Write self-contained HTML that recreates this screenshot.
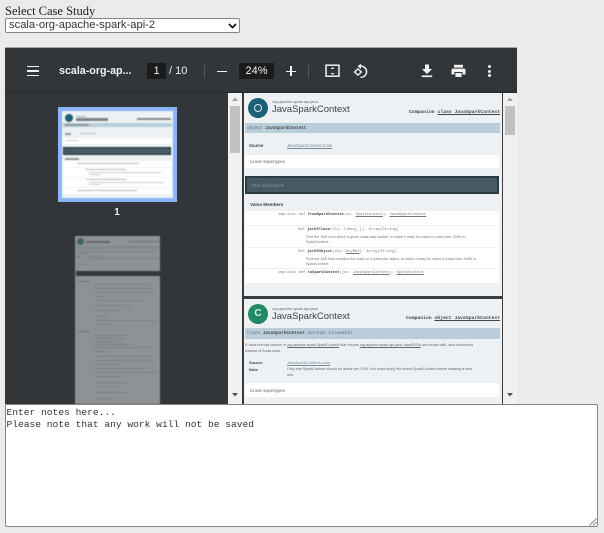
<!DOCTYPE html>
<html>
<head>
<meta charset="utf-8">
<style>
html,body{margin:0;padding:0;width:604px;height:533px;overflow:hidden;background:#ebebeb}
div,span{position:absolute;display:block;box-sizing:border-box;white-space:nowrap}
svg{position:absolute;overflow:visible}
#p{left:0;top:0;width:604px;height:533px;filter:blur(.35px)}
.s{font-family:"Liberation Sans",sans-serif;color:#777;font-size:4px;line-height:5px}
.m{font-family:"Liberation Mono",monospace;color:#777;font-size:3.8px;line-height:5px}
.b{font-weight:bold;color:#444}
.u{text-decoration:underline}
.w{background:#fff}
.tb{font-family:"Liberation Sans",sans-serif;color:#f1f1f1;font-size:12px;line-height:16px}
</style>
</head>
<body>
<div id="p">
<div style="left:5px;top:3px;font:12.5px/16px 'Liberation Serif',serif;color:#222">Select Case Study</div>
<div style="left:5px;top:18px;width:235px;height:15px;background:#fff;border:1px solid #858585;border-radius:2px;font:11.2px/13px 'Liberation Sans',sans-serif;color:#333;padding-left:3px">scala-org-apache-spark-api-2</div>
<svg style="left:228px;top:23px" width="10" height="6"><path d="M1 1L4.5 4.5L8 1" fill="none" stroke="#111" stroke-width="1.7"/></svg>

<!-- viewer -->
<div style="left:5px;top:47px;width:512px;height:357px;background:#323639;border-top:1px solid #a5a5a5;overflow:hidden"></div>

<!-- toolbar -->
<div style="left:5px;top:92px;width:512px;height:1px;background:#26292b"></div>
<div style="left:27px;top:65.500px;width:12px;height:1.500px;background:#f1f1f1"></div>
<div style="left:27px;top:70px;width:12px;height:1.500px;background:#f1f1f1"></div>
<div style="left:27px;top:74.500px;width:12px;height:1.500px;background:#f1f1f1"></div>
<div class="tb" style="left:59px;top:63px;font-weight:bold;font-size:10.700px">scala-org-ap...</div>
<div style="left:147px;top:63px;width:19px;height:16px;background:#191b1c"></div>
<div class="tb" style="left:147px;top:63px;width:19px;text-align:center;font-size:11px">1</div>
<div class="tb" style="left:169px;top:63px;font-size:11px">/ 10</div>
<div style="left:204px;top:65px;width:1px;height:13px;background:#55595c"></div>
<div style="left:217px;top:70.500px;width:10px;height:1.500px;background:#f1f1f1"></div>
<div style="left:239px;top:63px;width:35px;height:16px;background:#191b1c"></div>
<div class="tb" style="left:239px;top:63px;width:35px;text-align:center;font-size:11px">24%</div>
<div style="left:286px;top:70.500px;width:10px;height:1.500px;background:#f1f1f1"></div>
<div style="left:290.250px;top:66px;width:1.500px;height:10px;background:#f1f1f1"></div>
<div style="left:308px;top:65px;width:1px;height:13px;background:#55595c"></div>
<svg style="left:325px;top:64px" width="16" height="14" viewBox="0 0 16 14"><rect x="1" y="1.200" width="13" height="11" fill="none" stroke="#f1f1f1" stroke-width="1.500"/><path d="M7.500 3L5.600 5H9.400ZM7.500 11L5.600 9H9.400Z" fill="#f1f1f1"/></svg>
<svg style="left:353px;top:63px" width="16" height="17" viewBox="0 0 16 17"><path d="M7 3.200A5.600 5.600 0 1 1 7.500 14.300" fill="none" stroke="#f1f1f1" stroke-width="1.500"/><path d="M8 .6V6L4.600 3.300Z" fill="#f1f1f1"/><path d="M5 5.900L1.600 9L5 12.100L8.400 9Z" fill="none" stroke="#f1f1f1" stroke-width="1.400"/></svg>
<svg style="left:420.500px;top:64px" width="12" height="14" viewBox="0 0 12 14"><path d="M4 .5H8V5H11L6 10L1 5H4Z" fill="#f1f1f1"/><rect x=".8" y="11.400" width="10.400" height="1.700" fill="#f1f1f1"/></svg>
<svg style="left:451px;top:64px" width="15" height="14" viewBox="0 0 15 14"><path d="M3 .8H12V3.600H3Z" fill="#f1f1f1"/><path d="M2 4.600H13Q14.500 4.600 14.500 6.100V10.500H11.600V8H3.400V10.500H.5V6.100Q.5 4.600 2 4.600Z" fill="#f1f1f1"/><path d="M4.400 9H10.600V13H4.400Z" fill="#f1f1f1"/></svg>
<div style="left:488px;top:65px;width:3px;height:3px;border-radius:50%;background:#f1f1f1"></div>
<div style="left:488px;top:69.500px;width:3px;height:3px;border-radius:50%;background:#f1f1f1"></div>
<div style="left:488px;top:74px;width:3px;height:3px;border-radius:50%;background:#f1f1f1"></div>

<!-- left scrollbar -->
<div style="left:228px;top:93px;width:14px;height:311px;background:#f1f1f1"></div>
<div style="left:230px;top:106px;width:10px;height:47px;background:#c1c1c1"></div>
<svg style="left:232px;top:97px" width="7" height="4"><path d="M0 4L3 .5L6 4Z" fill="#a3a3a3"/></svg>
<svg style="left:232px;top:393px" width="7" height="4"><path d="M0 0L3 3.500L6 0Z" fill="#505050"/></svg>
<!-- right scrollbar -->
<div style="left:503px;top:93px;width:14px;height:311px;background:#f1f1f1"></div>
<div style="left:505px;top:106px;width:10px;height:29px;background:#c1c1c1"></div>
<svg style="left:507px;top:97px" width="7" height="4"><path d="M0 4L3 .5L6 4Z" fill="#a3a3a3"/></svg>
<svg style="left:507px;top:393px" width="7" height="4"><path d="M0 0L3 3.500L6 0Z" fill="#505050"/></svg>

<!-- main page area -->
<div style="left:242.500px;top:93px;width:260px;height:311px;background:#3a3e41"></div>

<!-- page 1 -->
<div style="left:244px;top:93px;width:257.500px;height:203px;background:#edf1f4"></div>
<div style="left:248px;top:98px;width:20px;height:20px;border-radius:50%;background:#1d5f77"></div>
<div style="left:254px;top:104px;width:8px;height:8px;border-radius:50%;border:1.300px solid #dfe9ee"></div>
<div class="s" style="left:272px;top:99px;font-size:4px;color:#666">org.apache.spark.api.java</div>
<div style="left:272px;top:103px;font:9.500px/14px 'Liberation Sans',sans-serif;color:#39444a">JavaSparkContext</div>
<div class="m b" style="left:409px;top:109.500px;font-size:4.750px;color:#444">Companion <span class="u" style="position:static;display:inline">class JavaSparkContext</span></div>
<div style="left:245px;top:123px;width:255px;height:10px;background:#b9cdda"></div>
<div class="m" style="left:247px;top:125.500px;font-size:4.300px;color:#5d6e78">object <span class="b" style="position:static;display:inline">JavaSparkContext</span></div>
<div class="s b" style="left:249px;top:142.500px;font-size:4.200px">Source</div>
<div class="s u" style="left:287px;top:142.500px;font-size:4.200px;color:#7a8a9c">JavaSparkContext.scala</div>
<div class="w" style="left:245px;top:155px;width:254px;height:13px"></div>
<div class="s" style="left:250px;top:159px;font-size:4.300px;color:#666">Linear Supertypes</div>
<div style="left:245px;top:176px;width:254px;height:18px;background:#465a64;border:2px solid #2c3a42"></div>
<div class="s" style="left:251px;top:182.500px;font-size:4.200px;color:#8b9aa3">Filter all members</div>
<div class="s b" style="left:250px;top:201.500px;font-size:4.600px">Value Members</div>
<div class="w" style="left:245px;top:211px;width:254px;height:14px"></div>
<div class="m" style="left:278px;top:212.500px"><span style="position:static;display:inline">implicit def </span><span class="b" style="position:static;display:inline">fromSparkContext</span>(sc: <span class="u" style="position:static;display:inline">SparkContext</span>): <span class="u" style="position:static;display:inline">JavaSparkContext</span></div>
<div class="w" style="left:245px;top:226px;width:254px;height:21px"></div>
<div class="m" style="left:298px;top:227.500px">def <span class="b" style="position:static;display:inline">jarOfClass</span>(cls: Class[_]): Array[String]</div>
<div class="s" style="left:306px;top:234.500px;font-size:3.700px">Find the JAR from which a given class was loaded, to make it easy for users to pass their JARs to</div>
<div class="s" style="left:306px;top:239.500px;font-size:3.700px">SparkContext.</div>
<div class="w" style="left:245px;top:248px;width:254px;height:20px"></div>
<div class="m" style="left:298px;top:249.500px">def <span class="b" style="position:static;display:inline">jarOfObject</span>(obj: <span class="u" style="position:static;display:inline">AnyRef</span>): Array[String]</div>
<div class="s" style="left:306px;top:256.500px;font-size:3.700px">Find the JAR that contains the class of a particular object, to make it easy for users to pass their JARs to</div>
<div class="s" style="left:306px;top:261.500px;font-size:3.700px">SparkContext.</div>
<div class="w" style="left:245px;top:269px;width:254px;height:14px"></div>
<div class="m" style="left:278px;top:271px">implicit def <span class="b" style="position:static;display:inline">toSparkContext</span>(jsc: <span class="u" style="position:static;display:inline">JavaSparkContext</span>): <span class="u" style="position:static;display:inline">SparkContext</span></div>

<!-- page 2 -->
<div style="left:244px;top:299px;width:257.500px;height:105px;background:#edf1f4"></div>
<div style="left:248px;top:304px;width:20px;height:20px;border-radius:50%;background:#1f8a63"></div>
<div style="left:248px;top:304px;width:20px;font:bold 10px/20px 'Liberation Sans',sans-serif;color:#dff0ea;text-align:center">C</div>
<div class="s" style="left:272px;top:306px;font-size:4px;color:#666">org.apache.spark.api.java</div>
<div style="left:272px;top:310px;font:9.500px/14px 'Liberation Sans',sans-serif;color:#39444a">JavaSparkContext</div>
<div class="m b" style="left:406px;top:315.500px;font-size:4.750px;color:#444">Companion <span class="u" style="position:static;display:inline">object JavaSparkContext</span></div>
<div style="left:245px;top:328px;width:255px;height:11px;background:#b9cdda"></div>
<div class="m" style="left:247px;top:331px;font-size:4.400px;color:#5d6e78">class <span class="b" style="position:static;display:inline">JavaSparkContext</span> extends Closeable</div>
<div class="s" style="left:245px;top:342.500px;font-size:3.700px;color:#666">A Java-friendly version of <span class="u" style="position:static;display:inline">org.apache.spark.SparkContext</span> that returns <span class="u" style="position:static;display:inline">org.apache.spark.api.java.JavaRDDs</span> and works with Java collections</div>
<div class="s" style="left:245px;top:348.500px;font-size:3.700px;color:#666">instead of Scala ones.</div>
<div class="s b" style="left:249px;top:359.500px;font-size:4px">Source</div>
<div class="s u" style="left:287px;top:359.500px;font-size:4px;color:#7a8a9c">JavaSparkContext.scala</div>
<div class="s b" style="left:249px;top:366.500px;font-size:4px">Note</div>
<div class="s" style="left:287px;top:366.500px;font-size:3.700px;color:#666">Only one SparkContext should be active per JVM. You must stop() the active SparkContext before creating a new</div>
<div class="s" style="left:287px;top:373px;font-size:3.700px;color:#666">one.</div>
<div class="w" style="left:245px;top:383px;width:254px;height:14px"></div>
<div class="s" style="left:250px;top:387.500px;font-size:4.300px;color:#666">Linear Supertypes</div>

<!-- thumb 1 -->
<div style="left:58px;top:107px;width:119px;height:95px;background:#8ab4f8"></div>
<div style="left:62px;top:111px;width:111px;height:87px;background:#edf1f4;filter:blur(.5px)">
  <div style="left:3px;top:3px;width:8px;height:8px;border-radius:50%;background:#1d5f77"></div>
  <div style="left:14px;top:5px;width:10px;height:1px;background:#aaa"></div>
  <div style="left:14px;top:7px;width:32px;height:2.500px;background:#7a8388"></div>
  <div style="left:75px;top:7px;width:34px;height:1.500px;background:#888"></div>
  <div style="left:1px;top:12px;width:109px;height:4px;background:#b9cdda"></div>
  <div style="left:3px;top:13px;width:24px;height:1.500px;background:#8d9aa3"></div>
  <div style="left:3px;top:22px;width:6px;height:1.500px;background:#999"></div>
  <div style="left:18px;top:22px;width:16px;height:1px;background:#bbc"></div>
  <div class="w" style="left:1px;top:27px;width:108px;height:6px"></div>
  <div style="left:3px;top:29px;width:14px;height:1px;background:#ccc"></div>
  <div style="left:1px;top:36px;width:108px;height:8px;background:#465a64;border:1px solid #2c3a42"></div>
  <div style="left:3px;top:47px;width:14px;height:1.500px;background:#999"></div>
  <div class="w" style="left:1px;top:50px;width:108px;height:6px"></div>
  <div style="left:15px;top:52px;width:62px;height:1.200px;background:#bbb"></div>
  <div class="w" style="left:1px;top:57px;width:108px;height:9px"></div>
  <div style="left:24px;top:58px;width:40px;height:1px;background:#bbb"></div>
  <div style="left:27px;top:61px;width:72px;height:1px;background:#ccc"></div>
  <div style="left:27px;top:63px;width:12px;height:1px;background:#ccc"></div>
  <div class="w" style="left:1px;top:67px;width:108px;height:9px"></div>
  <div style="left:24px;top:68px;width:40px;height:1px;background:#bbb"></div>
  <div style="left:27px;top:71px;width:75px;height:1px;background:#ccc"></div>
  <div style="left:27px;top:73px;width:12px;height:1px;background:#ccc"></div>
  <div class="w" style="left:1px;top:76.500px;width:108px;height:6px"></div>
  <div style="left:15px;top:78.500px;width:60px;height:1.200px;background:#bbb"></div>
</div>
<div style="left:107px;top:206px;width:20px;text-align:center;font:bold 10px/14px 'Liberation Sans',sans-serif;color:#eee">1</div>

<!-- thumb 2 -->
<div style="left:75px;top:236px;width:85px;height:168px;background:#8e9294;filter:blur(.6px);overflow:hidden">
  <div style="left:2px;top:2px;width:7px;height:7px;border-radius:50%;background:#43695d"></div>
  <div style="left:11px;top:5px;width:24px;height:2px;background:#62676a"></div>
  <div style="left:53px;top:5px;width:32px;height:1px;background:#727678"></div>
  <div style="left:1px;top:10px;width:84px;height:3px;background:#7f8a92"></div>
  <div style="left:2px;top:15px;width:78px;height:1px;background:#7c8083"></div>
  <div style="left:2px;top:17px;width:10px;height:1px;background:#7c8083"></div>
  <div style="left:2px;top:20px;width:4px;height:1px;background:#707376"></div>
  <div style="left:14px;top:20px;width:12px;height:1px;background:#7c8083"></div>
  <div style="left:14px;top:22px;width:70px;height:1px;background:#7c8083"></div>
  <div style="left:2px;top:28px;width:10px;height:1px;background:#7c8083"></div>
  <div style="left:1px;top:35px;width:84px;height:5px;background:#34393c"></div>
  <div style="left:3px;top:45px;width:12px;height:1px;background:#707376"></div>
  <div style="left:20px;top:48px;width:56px;height:1px;background:#7c8083"></div>
  <div style="left:20px;top:52px;width:56px;height:1px;background:#7c8083"></div>
  <div style="left:20px;top:56px;width:60px;height:1px;background:#7c8083"></div>
  <div style="left:20px;top:60px;width:8px;height:1px;background:#7c8083"></div>
  <div style="left:20px;top:64px;width:50px;height:1px;background:#7c8083"></div>
  <div style="left:20px;top:69px;width:36px;height:1px;background:#7c8083"></div>
  <div style="left:20px;top:74px;width:26px;height:1px;background:#7c8083"></div>
  <div style="left:20px;top:80px;width:12px;height:1px;background:#7c8083"></div>
  <div style="left:20px;top:84px;width:62px;height:1px;background:#7c8083"></div>
  <div style="left:20px;top:88px;width:18px;height:1px;background:#7c8083"></div>
  <div style="left:3px;top:95px;width:12px;height:1px;background:#707376"></div>
  <div style="left:20px;top:99px;width:34px;height:1px;background:#7c8083"></div>
  <div style="left:20px;top:102px;width:30px;height:1px;background:#7c8083"></div>
  <div style="left:20px;top:105px;width:24px;height:1px;background:#7c8083"></div>
  <div style="left:20px;top:108px;width:36px;height:1px;background:#7c8083"></div>
  <div style="left:20px;top:111px;width:58px;height:1px;background:#7c8083"></div>
  <div style="left:20px;top:115px;width:14px;height:1px;background:#7c8083"></div>
  <div style="left:20px;top:120px;width:56px;height:1px;background:#7c8083"></div>
  <div style="left:20px;top:124px;width:60px;height:1px;background:#7c8083"></div>
  <div style="left:20px;top:128px;width:24px;height:1px;background:#7c8083"></div>
  <div style="left:20px;top:132px;width:52px;height:1px;background:#7c8083"></div>
  <div style="left:20px;top:136px;width:62px;height:1px;background:#7c8083"></div>
  <div style="left:20px;top:140px;width:26px;height:1px;background:#7c8083"></div>
  <div style="left:20px;top:146px;width:34px;height:1px;background:#7c8083"></div>
  <div style="left:20px;top:150px;width:24px;height:1px;background:#7c8083"></div>
  <div style="left:20px;top:156px;width:34px;height:1px;background:#7c8083"></div>
  <div style="left:20px;top:162px;width:18px;height:1px;background:#7c8083"></div>
</div>

<!-- notes -->
<div style="left:5px;top:404px;width:593px;height:123px;background:#fff;border:1px solid #858585;border-radius:2px;font:9.600px/11.700px 'Liberation Mono',monospace;color:#333;padding:2px .5px">Enter notes here...<br>Please note that any work will not be saved</div>
<svg style="left:589px;top:518px" width="8" height="8"><path d="M7.500 .5L.5 7.500M7.500 4L4 7.500" stroke="#8a8a8a" stroke-width="1"/></svg>
</div>
</body>
</html>
